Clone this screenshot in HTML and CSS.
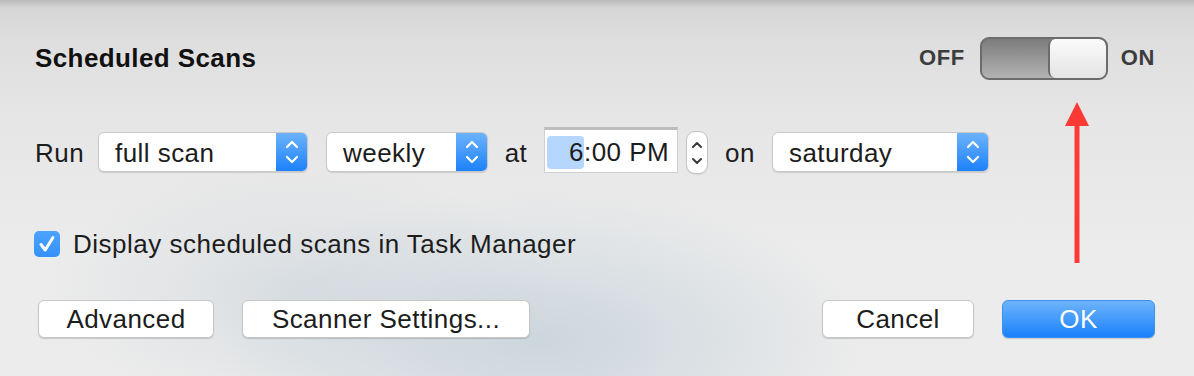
FILE: index.html
```html
<!DOCTYPE html>
<html>
<head>
<meta charset="utf-8">
<link rel="stylesheet" href="styles.css">
</head>
<body>
<div class="window">
  <div class="header">
    <div class="title">Scheduled Scans</div>
    <div class="toggle">
      <span class="tlabel off">OFF</span>
      <div class="switch"><div class="knob"></div></div>
      <span class="tlabel on">ON</span>
    </div>
  </div>

  <div class="run-row">
    <span class="lbl lbl-run">Run</span>
    <div class="popup w-full"><span class="ptext">full scan</span><span class="arrows"><svg width="14" height="26" viewBox="0 0 14 26"><path d="M2 8 L7 3 L12 8" /><path d="M2 18 L7 23 L12 18" /></svg></span></div>
    <div class="popup w-weekly"><span class="ptext">weekly</span><span class="arrows"><svg width="14" height="26" viewBox="0 0 14 26"><path d="M2 8 L7 3 L12 8" /><path d="M2 18 L7 23 L12 18" /></svg></span></div>
    <span class="lbl lbl-at">at</span>
    <div class="timefield"><span class="hour">6</span><span class="rest">:00 PM</span></div>
    <div class="stepper"><svg width="14" height="32" viewBox="0 0 14 32"><path d="M3 10 L7 6 L11 10" /><path d="M3 22 L7 26 L11 22" /></svg></div>
    <span class="lbl lbl-on">on</span>
    <div class="popup w-sat"><span class="ptext">saturday</span><span class="arrows"><svg width="14" height="26" viewBox="0 0 14 26"><path d="M2 8 L7 3 L12 8" /><path d="M2 18 L7 23 L12 18" /></svg></span></div>
  </div>

  <div class="check-row">
    <span class="checkbox"><svg width="26" height="26" viewBox="0 0 26 26"><path d="M7 13.5 L11.2 19 L19 6.5" /></svg></span>
    <span class="check-text">Display scheduled scans in Task Manager</span>
  </div>

  <div class="button-row">
    <div class="btn-group">
      <button class="btn b-adv">Advanced</button>
      <button class="btn b-scan">Scanner Settings...</button>
    </div>
    <div class="btn-group">
      <button class="btn b-cancel">Cancel</button>
      <button class="btn primary b-ok">OK</button>
    </div>
  </div>

  <svg class="red-arrow" width="26" height="162" viewBox="0 0 26 162">
    <polygon points="13,0 25,24 1,24" fill="#fb3a35"/>
    <rect x="10.5" y="22" width="5" height="139" fill="#fb3a35"/>
  </svg>
</div>
</body>
</html>
```

FILE: styles.css
```css
* { box-sizing: border-box; }
html, body { margin: 0; padding: 0; }
body {
  width: 1194px;
  height: 376px;
  overflow: hidden;
  font-family: "Liberation Sans", Arial, sans-serif;
  color: #1c1c1c;
  background:
    radial-gradient(ellipse 330px 150px at 540px 340px, rgba(198, 210, 218, 0.85), rgba(210, 218, 224, 0) 100%),
    radial-gradient(ellipse 260px 120px at 300px 290px, rgba(205, 212, 218, 0.6), rgba(210, 218, 224, 0) 100%),
    linear-gradient(#b9b9b9 0px, #d6d6d6 8px, #dedede 40px, #e6e6e6 120px, #ececec 260px);
}
.window {
  position: relative;
  width: 1194px;
  height: 376px;
}
.header {
  display: flex;
  align-items: center;
  justify-content: space-between;
  padding: 36px 39px 0 35px;
  height: 80px;
}
.title {
  font-size: 26px;
  font-weight: bold;
  letter-spacing: 0.4px;
  color: #111;
}
.toggle {
  display: flex;
  align-items: center;
  height: 43px;
}
.tlabel {
  font-size: 22px;
  font-weight: bold;
  letter-spacing: 0.6px;
  color: #3c3c3c;
}
.switch {
  width: 128px;
  height: 43px;
  margin: 0 13px 0 15px;
  border: 2px solid #6c6c6c;
  border-radius: 9px;
  background: linear-gradient(#7c7c7c, #b3b3b3);
  display: flex;
  justify-content: flex-end;
  overflow: hidden;
}
.knob {
  width: 58px;
  height: 100%;
  border-left: 2px solid #6c6c6c;
  border-radius: 7px;
  background: linear-gradient(#fbfbfb, #e4e4e4);
}

.run-row {
  display: flex;
  align-items: flex-start;
  margin-top: 47px;
  height: 46px;
  padding-left: 35px;
  font-size: 26px;
  letter-spacing: 0.45px;
}
.lbl { display: inline-block; line-height: 46px; margin-top: 3px; }
.lbl-run { width: 63px; }
.lbl-at { width: 56px; text-align: center; }
.lbl-on { width: 64px; text-align: center; }
.popup {
  height: 40px;
  margin-top: 5px;
  display: flex;
  align-items: stretch;
  background: #fff;
  border-radius: 6px;
  border: 1px solid #c9c9c9;
  box-shadow: 0 1px 1px rgba(0, 0, 0, 0.12);
  overflow: hidden;
}
.ptext {
  flex: 1;
  padding-left: 16px;
  line-height: 40px;
}
.arrows {
  width: 32px;
  display: flex;
  align-items: center;
  justify-content: center;
  background: linear-gradient(#6fb4fb, #1a80fb);
  margin: -1px -1px -1px 0;
}
.arrows svg path, .stepper svg path {
  fill: none;
  stroke: #fff;
  stroke-width: 2.2;
  stroke-linecap: round;
  stroke-linejoin: round;
}
.w-full { width: 210px; }
.w-weekly { width: 162px; margin-left: 18px; }
.w-sat { width: 217px; }

.timefield {
  width: 134px;
  height: 46px;
  background: #fff;
  border: 1px solid #cfcfcf;
  border-top: 3px solid #bdbdbd;
  display: flex;
  align-items: center;
  padding-left: 2px;
  padding-top: 2px;
}
.hour {
  display: inline-block;
  width: 37px;
  height: 33px;
  line-height: 33px;
  text-align: right;
  background: #b5d6fd;
  border-radius: 4px;
}
.stepper {
  width: 22px;
  height: 43px;
  margin-left: 8px;
  margin-top: 4px;
  background: #fff;
  border: 1px solid #c4c4c4;
  border-radius: 9px;
  display: flex;
  align-items: center;
  justify-content: center;
  box-shadow: 0 1px 1px rgba(0, 0, 0, 0.08);
}
.stepper svg path { stroke: #3a3a3a; stroke-width: 2; }

.check-row {
  display: flex;
  align-items: center;
  margin-top: 58px;
  padding-left: 34px;
  height: 26px;
  font-size: 26px;
  letter-spacing: 0.5px;
}
.checkbox {
  width: 26px;
  height: 26px;
  border-radius: 5px;
  background: linear-gradient(#4ba3fc, #3592fa);
  display: inline-flex;
  margin-right: 13px;
}
.checkbox svg path {
  fill: none;
  stroke: #fff;
  stroke-width: 3;
  stroke-linecap: round;
  stroke-linejoin: round;
}
.check-text { color: #1c1c1c; }

.button-row {
  display: flex;
  justify-content: space-between;
  margin-top: 43px;
  padding: 0 39px 0 38px;
}
.btn-group { display: flex; }
.btn {
  height: 38px;
  font-family: "Liberation Sans", Arial, sans-serif;
  font-size: 26px;
  letter-spacing: 0.45px;
  color: #1c1c1c;
  background: #fff;
  border: 1px solid #c6c6c6;
  border-radius: 6px;
  box-shadow: 0 1px 1px rgba(0, 0, 0, 0.15);
  padding: 0;
  line-height: 36px;
}
.b-adv { width: 176px; }
.b-scan { width: 288px; margin-left: 28px; }
.b-cancel { width: 152px; }
.b-ok { width: 153px; margin-left: 28px; }
.primary {
  color: #fff;
  border: 1px solid #3d91f3;
  background: linear-gradient(#6db4fb, #1a81fb);
}

.red-arrow {
  position: absolute;
  left: 1064px;
  top: 102px;
}
```
